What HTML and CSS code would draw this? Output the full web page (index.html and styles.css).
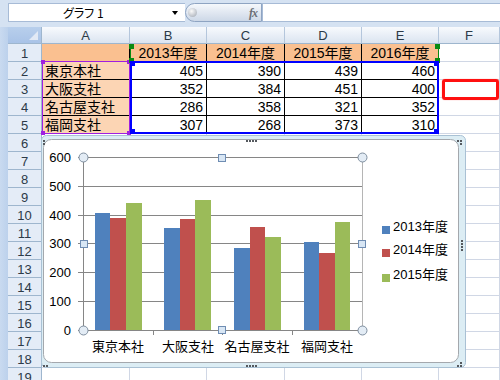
FILE: index.html
```html
<!DOCTYPE html>
<html lang="ja">
<head>
    <meta charset="UTF-8">
    <title>グラフ 1</title>
    <link rel="stylesheet" href="styles.css">
</head>
<body>
    <!-- Name box + formula bar -->
    <div class="formula-bar">
        <div class="name-box"><span class="name">グラフ 1</span><span class="drop"></span></div>
        <div class="fx-button"><span class="bead"></span><span class="fx">fx</span></div>
        <div class="formula-input"></div>
    </div>

    <div class="sheet">
        <div class="edge"></div>
        <div class="grid">
            <div class="corner"><span class="tri"></span></div>
            <div class="ch">A</div><div class="ch">B</div><div class="ch">C</div><div class="ch">D</div><div class="ch">E</div><div class="ch">F</div>

            <div class="rh">1</div>
            <div class="c hd b"></div>
            <div class="c hd b">2013年度</div>
            <div class="c hd b">2014年度</div>
            <div class="c hd b">2015年度</div>
            <div class="c hd b">2016年度</div>
            <div class="c"></div>

            <div class="rh">2</div>
            <div class="c cat b">東京本社</div>
            <div class="c num b">405</div><div class="c num b">390</div><div class="c num b">439</div><div class="c num b">460</div>
            <div class="c"></div>

            <div class="rh">3</div>
            <div class="c cat b">大阪支社</div>
            <div class="c num b">352</div><div class="c num b">384</div><div class="c num b">451</div><div class="c num b">400</div>
            <div class="c"></div>

            <div class="rh">4</div>
            <div class="c cat b">名古屋支社</div>
            <div class="c num b">286</div><div class="c num b">358</div><div class="c num b">321</div><div class="c num b">352</div>
            <div class="c"></div>

            <div class="rh">5</div>
            <div class="c cat b">福岡支社</div>
            <div class="c num b">307</div><div class="c num b">268</div><div class="c num b">373</div><div class="c num b">310</div>
            <div class="c"></div>

            <div class="rh">6</div><div class="c"></div><div class="c"></div><div class="c"></div><div class="c"></div><div class="c"></div><div class="c"></div>
            <div class="rh">7</div><div class="c"></div><div class="c"></div><div class="c"></div><div class="c"></div><div class="c"></div><div class="c"></div>
            <div class="rh">8</div><div class="c"></div><div class="c"></div><div class="c"></div><div class="c"></div><div class="c"></div><div class="c"></div>
            <div class="rh">9</div><div class="c"></div><div class="c"></div><div class="c"></div><div class="c"></div><div class="c"></div><div class="c"></div>
            <div class="rh">10</div><div class="c"></div><div class="c"></div><div class="c"></div><div class="c"></div><div class="c"></div><div class="c"></div>
            <div class="rh">11</div><div class="c"></div><div class="c"></div><div class="c"></div><div class="c"></div><div class="c"></div><div class="c"></div>
            <div class="rh">12</div><div class="c"></div><div class="c"></div><div class="c"></div><div class="c"></div><div class="c"></div><div class="c"></div>
            <div class="rh">13</div><div class="c"></div><div class="c"></div><div class="c"></div><div class="c"></div><div class="c"></div><div class="c"></div>
            <div class="rh">14</div><div class="c"></div><div class="c"></div><div class="c"></div><div class="c"></div><div class="c"></div><div class="c"></div>
            <div class="rh">15</div><div class="c"></div><div class="c"></div><div class="c"></div><div class="c"></div><div class="c"></div><div class="c"></div>
            <div class="rh">16</div><div class="c"></div><div class="c"></div><div class="c"></div><div class="c"></div><div class="c"></div><div class="c"></div>
            <div class="rh">17</div><div class="c"></div><div class="c"></div><div class="c"></div><div class="c"></div><div class="c"></div><div class="c"></div>
            <div class="rh">18</div><div class="c"></div><div class="c"></div><div class="c"></div><div class="c"></div><div class="c"></div><div class="c"></div>
            <div class="rh">19</div><div class="c"></div><div class="c"></div><div class="c"></div><div class="c"></div><div class="c"></div><div class="c"></div>
        </div>

        <!-- source range highlights -->
        <div class="range range-cat"><span class="k tl"></span><span class="k tr"></span><span class="k bl"></span><span class="k br"></span></div>
        <div class="range range-series"><span class="k tl"></span><span class="k tr"></span><span class="k bl"></span><span class="k br"></span></div>
        <div class="range range-values"><span class="k tl"></span><span class="k tr"></span><span class="k bl"></span><span class="k br"></span></div>
        <div class="active-cell"></div>

        <!-- embedded chart -->
        <div class="chart">
            <svg class="chart-svg" width="425" height="234" viewBox="41 135 425 234">
                <rect class="frame-outer" x="41.5" y="135.5" width="424" height="232" rx="5"/>
                <rect class="frame-inner" x="43.5" y="139.5" width="415" height="223" rx="8"/>

                <!-- frame grips -->
                <g class="grip">
                    <rect x="43" y="140" width="2" height="2"/><rect x="43" y="143" width="2" height="2"/>
                    <rect x="246" y="140" width="2" height="2"/><rect x="249" y="140" width="2" height="2"/><rect x="252" y="140" width="2" height="2"/><rect x="255" y="140" width="2" height="2"/>
                    <rect x="457" y="140" width="2" height="2"/><rect x="460" y="140" width="2" height="2"/><rect x="460" y="143" width="2" height="2"/>
                    <rect x="461" y="240" width="2" height="2"/><rect x="461" y="243" width="2" height="2"/><rect x="461" y="246" width="2" height="2"/><rect x="461" y="249" width="2" height="2"/>
                    <rect x="460" y="362" width="2" height="2"/><rect x="457" y="365" width="2" height="2"/><rect x="460" y="365" width="2" height="2"/>
                    <rect x="246" y="365" width="2" height="2"/><rect x="249" y="365" width="2" height="2"/><rect x="252" y="365" width="2" height="2"/><rect x="255" y="365" width="2" height="2"/>
                    <rect x="43" y="365" width="2" height="2"/><rect x="46" y="365" width="2" height="2"/>
                </g>

                <!-- plot area -->
                <rect class="plot-sel" x="83.5" y="157.5" width="279" height="173"/>
                <g class="gridline">
                    <line x1="78" y1="157.5" x2="362" y2="157.5"/>
                    <line x1="78" y1="186.5" x2="362" y2="186.5"/>
                    <line x1="78" y1="215.5" x2="362" y2="215.5"/>
                    <line x1="78" y1="243.5" x2="362" y2="243.5"/>
                    <line x1="78" y1="272.5" x2="362" y2="272.5"/>
                    <line x1="78" y1="301.5" x2="362" y2="301.5"/>
                </g>

                <g class="s2013">
                    <rect x="95" y="213" width="15" height="117"/>
                    <rect x="164" y="228" width="16" height="102"/>
                    <rect x="234" y="248" width="16" height="82"/>
                    <rect x="304" y="242" width="15" height="88"/>
                </g>
                <g class="s2014">
                    <rect x="110" y="218" width="16" height="112"/>
                    <rect x="180" y="219" width="15" height="111"/>
                    <rect x="250" y="227" width="15" height="103"/>
                    <rect x="319" y="253" width="16" height="77"/>
                </g>
                <g class="s2015">
                    <rect x="126" y="203" width="16" height="127"/>
                    <rect x="195" y="200" width="16" height="130"/>
                    <rect x="265" y="237" width="16" height="93"/>
                    <rect x="335" y="222" width="15" height="108"/>
                </g>

                <g class="axis">
                    <line x1="83.5" y1="157" x2="83.5" y2="331"/>
                    <line x1="78" y1="330.5" x2="362" y2="330.5"/>
                    <line x1="153.5" y1="330" x2="153.5" y2="335"/>
                    <line x1="222.5" y1="330" x2="222.5" y2="335"/>
                    <line x1="292.5" y1="330" x2="292.5" y2="335"/>
                </g>

                <g class="ax-label">
                    <text x="71" y="162">600</text>
                    <text x="71" y="191">500</text>
                    <text x="71" y="220">400</text>
                    <text x="71" y="248">300</text>
                    <text x="71" y="277">200</text>
                    <text x="71" y="306">100</text>
                    <text x="71" y="335">0</text>
                </g>
                <g class="cat-label">
                    <text x="118" y="351">東京本社</text>
                    <text x="188" y="351">大阪支社</text>
                    <text x="257" y="351">名古屋支社</text>
                    <text x="327" y="351">福岡支社</text>
                </g>

                <!-- legend -->
                <rect class="s2013" x="382" y="226" width="8" height="8"/>
                <text class="legend" x="393" y="231">2013年度</text>
                <rect class="s2014" x="382" y="249" width="8" height="8"/>
                <text class="legend" x="393" y="254">2014年度</text>
                <rect class="s2015" x="382" y="274" width="8" height="8"/>
                <text class="legend" x="393" y="279">2015年度</text>

                <!-- plot area selection handles -->
                <g class="handle-round">
                    <circle cx="83.5" cy="157.5" r="4.5"/>
                    <circle cx="362.5" cy="157.5" r="4.5"/>
                    <circle cx="83.5" cy="330.5" r="4.5"/>
                    <circle cx="362.5" cy="330.5" r="4.5"/>
                </g>
                <g class="handle-square">
                    <rect x="218.5" y="154.5" width="7" height="7"/>
                    <rect x="80.5" y="240.5" width="7" height="7"/>
                    <rect x="358.5" y="240.5" width="7" height="7"/>
                    <rect x="218.5" y="326.5" width="7" height="7"/>
                </g>
            </svg>
        </div>
    </div>
</body>
</html>
```

FILE: styles.css
```css
/* Page */
body {
    margin: 0;
    width: 500px;
    height: 380px;
    overflow: hidden;
    background-color: #d5e2f2;
    font-family: "Liberation Sans", "Noto Sans CJK JP", sans-serif;
    color: #000;
}

/* Formula bar */
.formula-bar {
    display: flex;
    height: 19px;
    padding: 3px 0 5px 8px;
}

.name-box {
    display: flex;
    align-items: center;
    justify-content: space-between;
    width: 177px;
    box-sizing: border-box;
    background: #fff;
    border: 1px solid #a7bbd6;
    border-right: none;
    padding: 0 7px 0 54px;
}

.name {
    font-family: "Noto Sans CJK JP", sans-serif;
    font-size: 12px;
    line-height: 17px;
    font-feature-settings: "palt";
}

.drop {
    width: 0;
    height: 0;
    border-left: 3px solid transparent;
    border-right: 3px solid transparent;
    border-top: 4px solid #000;
}

.fx-button {
    display: flex;
    align-items: center;
    justify-content: space-between;
    width: 77px;
    box-sizing: border-box;
    padding: 0 4px 0 2px;
    background: linear-gradient(#f5f8fc, #dfe6f0 55%, #cdd8e7);
    border: 1px solid #8ea4c2;
    border-radius: 10px 0 0 10px;
}

.bead {
    width: 9px;
    height: 9px;
    border-radius: 50%;
    background: radial-gradient(circle at 40% 35%, #fafafa, #b9bec6 70%, #8d939c);
}

.fx {
    font-family: "Liberation Serif", serif;
    font-style: italic;
    font-weight: bold;
    font-size: 12px;
    line-height: 14px;
    color: #6b6f76;
    letter-spacing: -1px;
}

.formula-input {
    flex: 1;
    background: #fff;
    border: 1px solid #a7bbd6;
    border-right: none;
}

/* Sheet grid */
.sheet {
    position: relative;
    display: flex;
}

.edge {
    flex: none;
    width: 8px;
    background: linear-gradient(90deg, #c9daf0, #bcd1ec);
}

.grid {
    flex: none;
    display: grid;
    grid-template-columns: 34px 88px 77px 78px 77px 77px 61px;
    grid-template-rows: 17px repeat(19, 18px);
}

.corner {
    display: flex;
    align-items: flex-end;
    justify-content: flex-end;
    padding: 0 3px 3px 0;
    background: linear-gradient(#b8cfec, #a9c3e7);
    border-right: 1px solid #9eb6ce;
    border-bottom: 1px solid #9eb6ce;
}

.tri {
    width: 0;
    height: 0;
    border-left: 9px solid transparent;
    border-bottom: 9px solid #e1e9f5;
}

.ch {
    background: linear-gradient(#f8fafd, #e9eff7 50%, #dbe4f0);
    border-right: 1px solid #b4c6dc;
    border-bottom: 1px solid #9eb6ce;
    text-align: center;
    font-size: 13px;
    line-height: 18px;
    color: #2c3a48;
}

.rh {
    background: #e4ecf7;
    border-right: 1px solid #9eb6ce;
    border-bottom: 1px solid #9eb6ce;
    text-align: center;
    font-size: 13px;
    line-height: 19px;
    color: #2c3a48;
}

.c {
    background: #fff;
    border-right: 1px solid #d0d7e5;
    border-bottom: 1px solid #d0d7e5;
    font-size: 14px;
    line-height: 19px;
    white-space: nowrap;
}

.c.hd {
    background: #fac090;
    text-align: center;
}

.c.cat {
    background: #fcd5b4;
    padding-left: 3px;
}

.c.num {
    text-align: right;
    padding-right: 3px;
}

.c.b {
    border-color: #000;
}

/* Range highlights drawn over the grid */
.range {
    position: absolute;
    box-sizing: border-box;
}

.range-cat {
    left: 42px;
    top: 34px;
    width: 88px;
    height: 73px;
    border: 1px solid #9f1fe0;
}

.range-series {
    left: 130px;
    top: 17px;
    width: 309px;
    height: 18px;
    border: 1px solid #0b8a12;
    border-top: none;
}

.range-values {
    left: 130px;
    top: 34px;
    width: 309px;
    height: 73px;
    border: 2px solid #0000ff;
}

.k {
    position: absolute;
    width: 4px;
    height: 4px;
}

.range-cat .k { background: #9f1fe0; }
.range-series .k { background: #0b8a12; width: 5px; height: 5px; }
.range-values .k { background: #0000ff; width: 5px; height: 5px; }

.tl { left: -2px; top: -2px; }
.tr { right: -2px; top: -2px; }
.bl { left: -2px; bottom: -2px; }
.br { right: -2px; bottom: -2px; }

.range-series .tl { top: 0; }
.range-series .tr { top: 0; }

.active-cell {
    position: absolute;
    left: 442px;
    top: 52px;
    width: 57px;
    height: 21px;
    box-sizing: border-box;
    border: 3px solid #ff1010;
    border-radius: 3px;
    box-shadow: 0 0 1px #ff6060;
}

/* Chart */
.chart {
    position: absolute;
    left: 41px;
    top: 108px;
    width: 425px;
    height: 234px;
}

.chart-svg {
    display: block;
}

.frame-outer {
    fill: #dcedf4;
    stroke: #a9c1d4;
}

.frame-inner {
    fill: #fff;
    stroke: #a4a8ad;
}

.grip rect { fill: #55595e; }

.plot-sel {
    fill: none;
    stroke: #b5b5b5;
}

.gridline line,
.axis line {
    stroke: #868686;
    stroke-width: 1;
}

.s2013 { fill: #4f81bd; }
.s2014 { fill: #c0504d; }
.s2015 { fill: #9bbb59; }

.ax-label text {
    font-size: 13px;
    text-anchor: end;
    fill: #000;
}

.cat-label text {
    font-size: 13px;
    text-anchor: middle;
    fill: #000;
}

.legend {
    font-size: 13px;
    fill: #000;
}

.handle-round circle {
    fill: #e3ecf5;
    stroke: #7e8e9f;
}

.handle-square rect {
    fill: #d8e6f4;
    stroke: #6f8db3;
}
```
